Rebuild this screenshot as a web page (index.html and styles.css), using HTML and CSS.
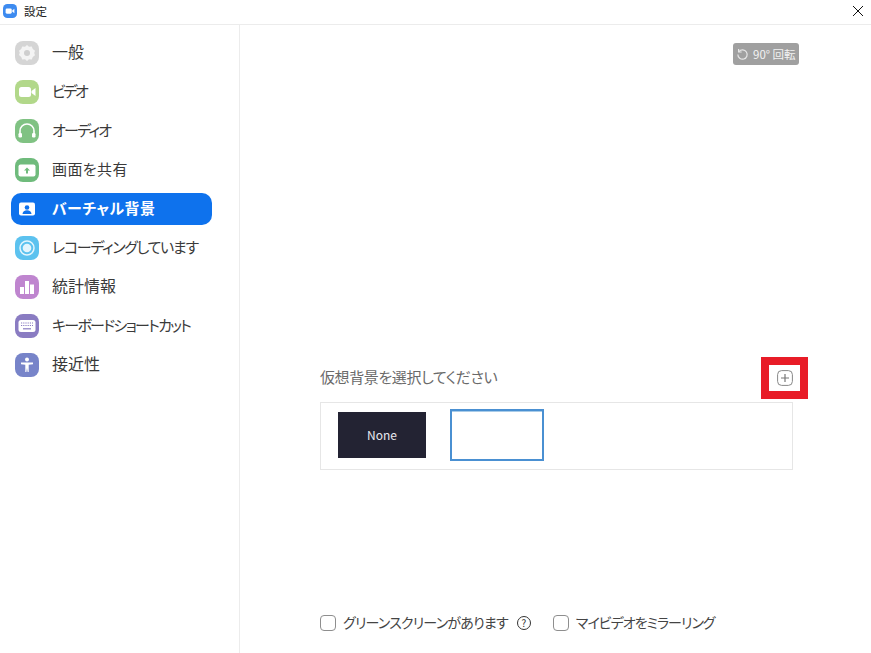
FILE: index.html
```html
<!DOCTYPE html>
<html lang="ja">
<head>
<meta charset="utf-8">
<title>設定</title>
<link rel="stylesheet" href="styles.css">
</head>
<body>
<div class="window">
  <header class="titlebar">
    <svg class="app-icon" viewBox="0 0 16 16"><rect width="16" height="16" rx="5" fill="#3d8bf0"/><rect x="3" y="5" width="7" height="6" rx="1.5" fill="#fff"/><path d="M10.5 7.5l2.5-2v5l-2.5-2z" fill="#fff"/></svg>
    <span class="title">設定</span>
    <svg class="close" viewBox="0 0 10 10"><path d="M0 0l10 10M10 0L0 10" stroke="#111" stroke-width="1" fill="none"/></svg>
  </header>
  <div class="main">
    <nav class="sidebar">
      <div class="item"><svg class="icon" viewBox="0 0 24 24"><rect width="24" height="24" rx="8" fill="#d5d5d5"/><path d="M12 4l2 1.800 2.800-.4 1 2.600 2.200 1.800-.8 2.200.8 2.200-2.200 1.800-1 2.600-2.800-.4-2 1.800-2-1.800-2.800.4-1-2.600L4 14l.8-2.200L4 9.800 6.200 8l1-2.600 2.800.4z" fill="#f4f4f4"/><circle cx="12" cy="12" r="3" fill="#cfcfcf"/></svg><span class="label kanji">一般</span></div>
      <div class="item"><svg class="icon" viewBox="0 0 24 24"><rect width="24" height="24" rx="8" fill="#b2d88a"/><rect x="4" y="7" width="12" height="10" rx="2.5" fill="#fff"/><path d="M16.5 11l4-3v8l-4-3z" fill="#fff"/></svg><span class="label kana-short">ビデオ</span></div>
      <div class="item"><svg class="icon" viewBox="0 0 24 24"><rect width="24" height="24" rx="8" fill="#80c283"/><path d="M5 16v-4a7 7 0 0 1 14 0v4" stroke="#fff" stroke-width="1.6" fill="none"/><rect x="3.5" y="14" width="3.5" height="4.5" rx="1.2" fill="#fff"/><rect x="17" y="14" width="3.5" height="4.5" rx="1.2" fill="#fff"/></svg><span class="label kana">オーディオ</span></div>
      <div class="item"><svg class="icon" viewBox="0 0 24 24"><rect width="24" height="24" rx="8" fill="#6fbb7c"/><rect x="3.5" y="6.5" width="17" height="12" rx="2" fill="#fff"/><path d="M12 9.500l3 3h-2V15.500h-2V12.500H9z" fill="#6fbb7c"/></svg><span class="label mixed">画面を共有</span></div>
      <div class="item active"><svg class="icon" viewBox="0 0 24 24"><rect x="4" y="5.5" width="16" height="13" rx="2" fill="#fff"/><circle cx="12" cy="10.5" r="2.3" fill="#0e72ed"/><path d="M7.5 17c0-2.500 2-3.800 4.500-3.800s4.500 1.300 4.500 3.800z" fill="#0e72ed"/></svg><span class="label mixed">バーチャル背景</span></div>
      <div class="item"><svg class="icon" viewBox="0 0 24 24"><rect width="24" height="24" rx="8" fill="#5cc2ef"/><circle cx="12" cy="12" r="7" fill="none" stroke="#e4f5fd" stroke-width="1.5"/><circle cx="12" cy="12" r="4.3" fill="#e4f5fd"/></svg><span class="label kana-long">レコーディングしています</span></div>
      <div class="item"><svg class="icon" viewBox="0 0 24 24"><rect width="24" height="24" rx="8" fill="#bf85cf"/><rect x="5" y="12" width="4" height="7" fill="#fff"/><rect x="10" y="6" width="4" height="13" fill="#fff"/><rect x="15" y="9.5" width="4" height="9.5" fill="#fff"/></svg><span class="label kanji">統計情報</span></div>
      <div class="item"><svg class="icon" viewBox="0 0 24 24"><rect width="24" height="24" rx="8" fill="#8a7cc2"/><rect x="3.5" y="6" width="17" height="12" rx="2.5" fill="#fff"/><path d="M6 9h12M6 11.500h12" stroke="#8a7cc2" stroke-width="1.2" stroke-dasharray="1.2 1"/><path d="M8 14.800h8" stroke="#8a7cc2" stroke-width="1.2"/></svg><span class="label kana">キーボードショートカット</span></div>
      <div class="item"><svg class="icon" viewBox="0 0 24 24"><rect width="24" height="24" rx="8" fill="#7784c9"/><circle cx="12" cy="6.5" r="2" fill="#fff"/><path d="M6 9.500h12v1.700l-4.300.6V19h-1.100l-.6-4-.6 4h-1.100v-7.200L6 11.200z" fill="#fff"/></svg><span class="label kanji">接近性</span></div>
    </nav>
    <section class="content">
      <div class="rotate"><svg class="rotate-icon" viewBox="0 0 14 14"><path d="M3.200 3.800A5 5 0 1 1 2 7" fill="none" stroke="#e6e6e6" stroke-width="1.3"/><path d="M2.800 1v3.300h3.300" fill="none" stroke="#e6e6e6" stroke-width="1.3"/></svg><span>90° 回転</span></div>
      <div class="choose-head">
        <span class="choose-label">仮想背景を選択してください</span>
        <div class="add-frame"><svg class="add-icon" viewBox="0 0 16 16"><rect x=".6" y=".6" width="14.8" height="14.8" rx="4" fill="none" stroke="#888" stroke-width="1"/><path d="M8 4v8M4 8h8" stroke="#777" stroke-width="1.2"/></svg></div>
      </div>
      <div class="gallery">
        <div class="thumb-none">None</div>
        <div class="thumb-selected"></div>
      </div>
      <div class="options">
        <span class="check"></span><span class="opt-text green">グリーンスクリーンがあります</span>
        <span class="help">?</span>
        <span class="check second"></span><span class="opt-text mirror">マイビデオをミラーリング</span>
      </div>
    </section>
  </div>
</div>
</body>
</html>
```

FILE: styles.css
```css
html, body {
  margin: 0;
  padding: 0;
  background: #fff;
}
.window {
  width: 871px;
  height: 653px;
  display: flex;
  flex-direction: column;
  overflow: hidden;
  font-family: "Noto Sans CJK JP", "Noto Sans", sans-serif;
  font-feature-settings: "palt";
  color: #333;
}
.titlebar {
  height: 25px;
  box-sizing: border-box;
  flex: none;
  display: flex;
  align-items: center;
  padding: 0 8px 2px 3px;
  border-bottom: 1px solid #ececec;
}
.app-icon {
  width: 14px;
  height: 14px;
}
.title {
  margin-left: 7px;
  font-size: 11.5px;
  color: #222;
  flex: 1;
}
.close {
  width: 10px;
  height: 10px;
}
.main {
  flex: 1;
  display: flex;
  min-height: 0;
}
.sidebar {
  width: 240px;
  flex: none;
  box-sizing: border-box;
  border-right: 1px solid #ececec;
  padding: 12px 0 0 11px;
  display: flex;
  flex-direction: column;
  gap: 7px;
}
.item {
  width: 201px;
  height: 32px;
  box-sizing: border-box;
  padding-left: 4px;
  display: flex;
  align-items: center;
  gap: 13px;
  color: #3a3a3a;
  border-radius: 10px;
}
.item.active {
  background: #0e72ed;
  color: #fff;
  font-weight: 700;
}
.icon {
  width: 24px;
  height: 24px;
  flex: none;
}
.label {
  white-space: nowrap;
  margin-top: -4px;
  font-size: 15px;
}
.label.kanji {
  font-size: 16px;
}
.label.mixed {
  letter-spacing: .4px;
}
.label.kana-short {
  letter-spacing: -2.4px;
}
.label.kana {
  letter-spacing: -1.7px;
}
.label.kana-long {
  letter-spacing: -1.3px;
}
.content {
  flex: 1;
  display: flex;
  flex-direction: column;
  padding-left: 80px;
  min-width: 0;
}
.rotate {
  align-self: flex-start;
  margin: 18px 0 0 413px;
  width: 66px;
  height: 22px;
  box-sizing: border-box;
  padding-left: 3px;
  display: flex;
  align-items: center;
  gap: 4px;
  background: #a0a0a0;
  border-radius: 3px;
  color: #f2f2f2;
  font-size: 11.5px;
  white-space: nowrap;
}
.rotate-icon {
  width: 13px;
  height: 13px;
  flex: none;
}
.choose-head {
  width: 488px;
  margin-top: 292px;
  display: flex;
  align-items: center;
  justify-content: space-between;
}
.choose-label {
  font-size: 15px;
  letter-spacing: -.4px;
  color: #6a6a6a;
  margin-top: -4px;
}
.add-frame {
  width: 47px;
  height: 42px;
  box-sizing: border-box;
  border: 8px solid #e81c27;
  display: flex;
  align-items: center;
  justify-content: center;
}
.add-icon {
  width: 16px;
  height: 16px;
}
.gallery {
  width: 473px;
  height: 68px;
  margin-top: 3px;
  box-sizing: border-box;
  border: 1px solid #e6e6e6;
  padding: 6px 0 0 17px;
  display: flex;
  align-items: flex-start;
  gap: 24px;
}
.thumb-none {
  width: 88px;
  height: 46px;
  margin-top: 3px;
  padding-bottom: 2px;
  box-sizing: border-box;
  background: #232333;
  color: #e8e8ee;
  font-size: 12px;
  display: flex;
  align-items: center;
  justify-content: center;
}
.thumb-selected {
  width: 94px;
  height: 52px;
  box-sizing: border-box;
  border: 2px solid #4a90d2;
  box-shadow: inset 0 1px #a8cbe8;
}
.options {
  margin-top: 143px;
  display: flex;
  align-items: center;
  height: 20px;
  font-size: 14px;
  color: #444;
}
.check {
  width: 16px;
  height: 16px;
  box-sizing: border-box;
  border: 1px solid #8e8e8e;
  border-radius: 4px;
  flex: none;
}
.check.second {
  margin-left: 22px;
}
.opt-text {
  margin-left: 7px;
  white-space: nowrap;
  margin-top: -3px;
}
.opt-text.green {
  letter-spacing: -.8px;
}
.opt-text.mirror {
  letter-spacing: -1px;
}
.help {
  width: 14px;
  height: 14px;
  margin-left: 9px;
  flex: none;
  box-sizing: border-box;
  border: 1px solid #333;
  border-radius: 50%;
  display: flex;
  align-items: center;
  justify-content: center;
  font-size: 10px;
  line-height: 12px;
  color: #333;
}
```
